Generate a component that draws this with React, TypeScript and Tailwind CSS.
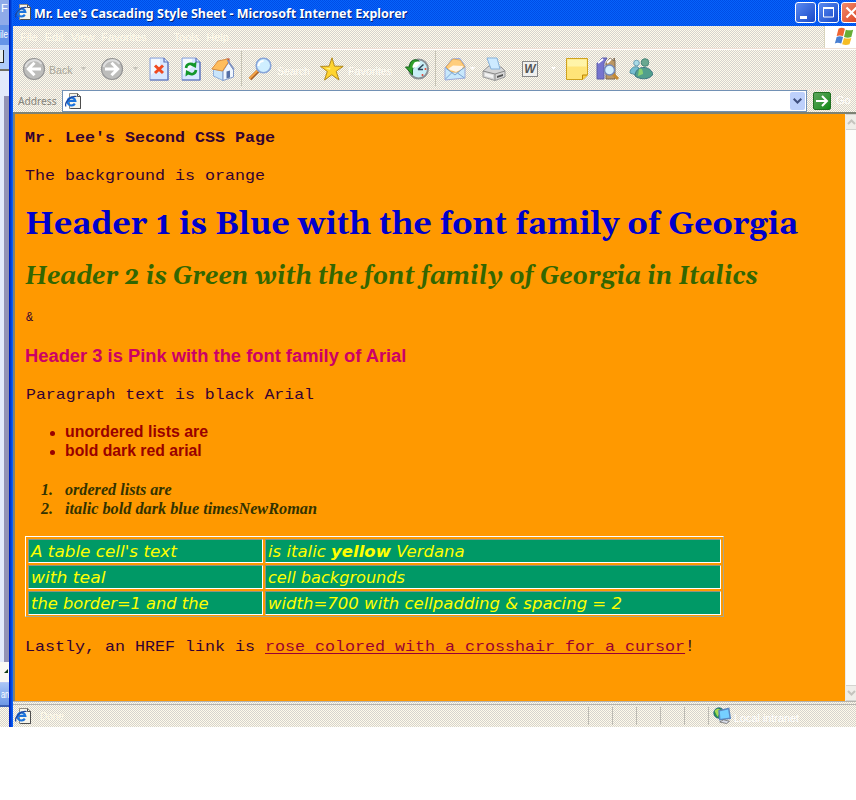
import React, { useLayoutEffect, useRef, useState } from "react";

const mono = "font-['Liberation_Mono',monospace] text-[16px] text-[#330033]";
const dither = "bg-[#ece9df] bg-[repeating-conic-gradient(#fffbea_0_25%,#d6d3ce_0_50%)] bg-[length:2px_2px]";

// Stretches one line of text to an exact width.
function Fit({ w, className = "", children }: { w: number; className?: string; children: React.ReactNode }) {
  const ref = useRef<HTMLSpanElement>(null);
  const [s, setS] = useState(1);
  useLayoutEffect(() => {
    if (ref.current) setS(w / ref.current.offsetWidth);
  }, [w]);
  return (
    <span className="block" style={{ width: w }}>
      <span ref={ref} className={"inline-block origin-left whitespace-nowrap " + className} style={{ transform: `scaleX(${s})` }}>
        {children}
      </span>
    </span>
  );
}

function Svg({ children, className = "h-6 w-6" }: { children: React.ReactNode; className?: string }) {
  return <svg viewBox="0 0 24 24" className={"shrink-0 " + className}>{children}</svg>;
}

function PageE({ className = "h-4 w-4" }: { className?: string }) {
  return (
    <svg viewBox="0 0 16 16" className={"shrink-0 " + className}>
      <path d="M4.500.5h8l3 3v12h-11z" fill="#f6f4ea" stroke="#8d8b84" />
      <path d="M12.500.5v3h3v12h-10" fill="none" stroke="#4d4d4d" />
      <path d="M9.800 10.600A3.900 3.900 0 1 1 10.300 7.900H3" fill="none" stroke="#1d74dc" strokeWidth="2.200" />
      <path d="M1 13.500C-1 9.500 5.500 2.300 11.600 3.500" fill="none" stroke="#1c459f" strokeWidth="1.200" />
    </svg>
  );
}

function Nav({ flip = false }: { flip?: boolean }) {
  return (
    <Svg>
      <circle cx="12" cy="12" r="10.500" fill="#bdbdbb" stroke="#959595" strokeWidth="1.200" />
      <path d="M3.500 10a9 9 0 0 1 16-3" fill="none" stroke="#dedede" strokeWidth="2" />
      <g transform={flip ? "translate(24 0) scale(-1 1)" : undefined}>
        <path d="M19 12H7M12.500 5.800 6.300 12l6.200 6.200" fill="none" stroke="#fff" strokeWidth="3" />
      </g>
    </Svg>
  );
}

function Paper({ children }: { children: React.ReactNode }) {
  return (
    <Svg>
      <path d="M3 1h14l4 4v18H3z" fill="#d8e8ff" stroke="#8fa5da" />
      <path d="M4 2h9v8L4 18z" fill="#f4f9ff" />
      <path d="M17 1v4h4M21 5v18H3" fill="none" stroke="#5a70b8" strokeWidth="1.200" />
      {children}
    </Svg>
  );
}

function Toolbar() {
  return (
    <div className={"flex h-[40px] items-center border-t border-[#fff] pb-[2px] pl-[9px] " + dither}>
      <Nav />
      <span className="mb-[2px] ml-[3px] w-[24px]"><Fit w={23} className="font-['Liberation_Sans',sans-serif] text-[11px] leading-[16px] text-[#a9a697]">Back</Fit></span>
      <Arrow className="ml-[8px] text-[#c3c1b8]" />
      <span className="ml-[14px] flex"><Nav flip /></span>
      <Arrow className="ml-[9px] text-[#c3c1b8]" />
      <span className="ml-[9px] flex"><Paper><path d="m8 8.500 8 7.500M16 8.500 8 16" stroke="#f04a20" strokeWidth="3" /></Paper></span>
      <span className="ml-[8px] flex"><Paper>
        <path d="M7 11c.5-4.500 5-5 8-3M17 13c-.5 4.500-5 5-8 3" fill="none" stroke="#13972a" strokeWidth="2.600" />
        <path d="m17.500 4.500-.5 6.500-5-2.500zM6.500 19.500 7 13l5 2.500z" fill="#13972a" />
      </Paper></span>
      <span className="ml-[8px] flex"><Svg>
        <path d="M15.500 1.500h3v6h-3z" fill="#b83c28" />
        <path d="m2.500 12 9.500 2v9.500L2.500 19z" fill="#c9e5fb" stroke="#8fb0de" />
        <path d="m12 14 5.500-8.500 5 7.500v7L12 23.500z" fill="#f0f7ff" stroke="#7f98c8" />
        <path d="M.8 12 7 4l9.500-2L17.500 5l-6 9z" fill="#ffbd5c" stroke="#d98d3f" />
        <path d="m16.500 3 6.500 9.500" stroke="#7f92c0" strokeWidth="1.500" />
        <path d="M15.500 14.500 19 13.500v7l-3.500 1z" fill="#5670a6" />
      </Svg></span>
      <span className="ml-[6px] h-[35px] w-px bg-[#c7c4b5]" />
      <span className="ml-[6px] flex"><Svg>
        <path d="M10 14 2 22" stroke="#a65c22" strokeWidth="3.600" /><path d="M9.500 13.500 1.500 21.500" stroke="#f4a347" strokeWidth="2" />
        <circle cx="15.500" cy="8.500" r="7.300" fill="#cfeeff" stroke="#88a5d8" strokeWidth="1.600" />
        <path d="M10.500 9a5 5 0 0 1 5-5" fill="none" stroke="#fff" strokeWidth="2" />
      </Svg></span>
      <span className="ml-[5px] w-[34px]"><Fit w={33} className="font-['Liberation_Sans',sans-serif] text-[11px] text-[#fffdf5]">Search</Fit></span>
      <span className="ml-[9px] flex"><Svg>
        <path d="m12 .8 2.500 8.400 8.700.1-7 5 2.800 8.700-7.200-5.200L4.500 23l2.800-8.600-6.800-5 8.600-.2z" fill="#ffd42f" stroke="#b38a1c" strokeLinejoin="round" />
        <path d="m12 4-1.500 7-5.500 0 5 2z" fill="#fff27c" />
      </Svg></span>
      <span className="ml-[4px] w-[46px]"><Fit w={44} className="font-['Liberation_Sans',sans-serif] text-[11px] text-[#fffdf5]">Favorites</Fit></span>
      <span className="ml-[11px] flex"><Svg>
        <circle cx="13.500" cy="12" r="9.500" fill="#c8eef6" stroke="#8a9094" strokeWidth="2" />
        <path d="M14 4C9 1 4.500 4 4.500 10H.5l7 8V13c0-4 5-3 6-6z" fill="#32a12b" stroke="#18691d" />
        <path d="M8.500 7c1.500-3 6-3 7-1l-3.500 4-4 1c-1-1-.5-2 .5-4z" fill="#fff" />
        <path d="m13 12.500 5.500-5M13 12.500h5" stroke="#304558" strokeWidth="1.500" />
        <circle cx="17.500" cy="18" r="1" fill="#e34335" /><circle cx="20.500" cy="12" r="1" fill="#e34335" />
      </Svg></span>
      <span className="ml-[6px] h-[35px] w-px bg-[#c7c4b5]" />
      <span className="ml-[7px] flex"><Svg>
        <path d="M2 11 9 2l8-.5L22 9v12L2 23z" fill="#c8e8fc" stroke="#9aa9da" />
        <path d="m3 10 7-8 7 1 5 7-7 5H8z" fill="#ffcd7b" stroke="#e0a95c" /><path d="m5 12 5-3.500 10 .5-1 3-6 3z" fill="#fff5e6" />
        <path d="M2.500 11 12 18l9.500-8M2.500 22l7-7M21.500 21l-7-5" fill="none" stroke="#7ba6d6" />
      </Svg></span>
      <Arrow className="ml-[3px] text-white" />
      <span className="ml-[7px] flex"><Svg>
        <path d="M1 14 7 9l12 1 4 4v6l-10 3.500L1 20z" fill="#d6d6d6" stroke="#999" />
        <path d="M5 1h10l3 11H9z" fill="#cdeaff" stroke="#86b1d9" />
        <path d="m1 14 12 3 10-3M13 17v6" fill="none" stroke="#888" /><path d="m3 16 8 2v3l-8-2z" fill="#f3f3f3" /><path d="m15 19 6-2v2l-6 2z" fill="#555" />
      </Svg></span>
      <span className="ml-[16px] flex h-4 w-4 items-center justify-center border border-[#888] bg-[#f0f0ee] font-['Liberation_Sans',sans-serif] text-[12px] leading-none font-bold text-[#555] italic">W</span>
      <Arrow className="ml-[13px] text-white" />
      <span className="ml-[9px] flex"><Svg>
        <path d="M1.500 1.500h21V18l-4.500 4.500H1.500z" fill="#ffe478" stroke="#d0a31e" /><path d="M2.500 2.500h19v7h-19z" fill="#fff4a8" /><path d="M17.500 22v-4h4.500" fill="#ffd039" stroke="#b98409" />
      </Svg></span>
      <span className="ml-[7px] flex"><Svg>
        <path d="m1 6 5-5h5L8 6v16H1z" fill="#7674cf" stroke="#5f5ea8" /><path d="m10 6 4-5 4 3v-3l1 3v18h-9z" fill="#bd9863" stroke="#7b664e" /><path d="m2 6 5-4M11 6l4-4" stroke="#fff" strokeWidth="2" />
        <path d="m17 17 5 5" stroke="#c68a30" strokeWidth="3" /><circle cx="13.500" cy="13" r="5" fill="#d2efff" stroke="#7389bd" strokeWidth="1.500" />
      </Svg></span>
      <span className="ml-[9px] flex"><Svg>
        <circle cx="7.500" cy="6" r="2.800" fill="#a9dbe6" stroke="#6d9fb6" /><circle cx="16" cy="5.500" r="3.800" fill="#6aa890" stroke="#4a8679" />
        <path d="M1 16c0-5 4-7 8-6l3 6-5 2z" fill="#75bdd1" stroke="#5595a5" /><path d="M6 19c0-10 14-12 18-2-3 6-13 6-18 2z" fill="#519f8c" stroke="#3a7681" /><path d="M10 12c3-2 4 2 4 5l-5 2z" fill="#8bd173" />
      </Svg></span>
    </div>
  );
}

function Arrow({ className = "" }: { className?: string }) {
  return <svg viewBox="0 0 5 3" className={"h-[3px] w-[5px] shrink-0 " + className}><path d="M0 0h5L2.500 3z" fill="currentColor" /></svg>;
}

function TitleButton({ red = false, children }: { red?: boolean; children: React.ReactNode }) {
  return (
    <span className={"flex h-[21px] w-[21px] shrink-0 rounded-[3px] border border-white " + (red ? "bg-linear-to-br from-[#f08a6c] to-[#d93a18]" : "bg-linear-to-br from-[#5b8af0] to-[#1747c8]")}>
      <svg viewBox="0 0 19 19" className="h-[19px] w-[19px]" fill="none" stroke="#fff">{children}</svg>
    </span>
  );
}

const rows: [React.ReactNode, number, React.ReactNode, number][] = [
  ["A table cell's text", 146, <>is italic <b className="font-bold">yellow</b> Verdana</>, 197],
  ["with teal", 74, "cell backgrounds", 137],
  ["the border=1 and the", 178, "width=700 with cellpadding & spacing = 2", 354],
];

function Cell({ children, w, className }: { children: React.ReactNode; w: number; className: string }) {
  return (
    <div className={"h-[24px] border border-t-[#8c9585] border-r-white border-b-white border-l-[#8c9585] bg-[#009966] pl-[2px] text-[16px] leading-[23px] text-[#ffff00] italic font-['DejaVu_Sans',sans-serif] font-extralight " + className}>
      <Fit w={w}>{children}</Fit>
    </div>
  );
}

function Page() {
  return (
    <main className="h-[587px] w-[830px] shrink-0 overflow-hidden bg-[#ff9900] pt-[14px] pl-[10px]">
      <p className={"h-[38px] leading-[20px] font-bold " + mono}><Fit w={250} className="text-[15px]">Mr. Lee's Second CSS Page</Fit></p>
      <p className={"h-[38px] leading-[20px] " + mono}><Fit w={240} className="text-[15px]">The background is orange</Fit></p>
      <h1 className="h-[52px] pt-px font-['Gelasio','Georgia','DejaVu_Serif',serif] text-[33px] leading-[38px] font-bold text-[#0000cc]"><Fit w={773}>Header 1 is Blue with the font family of Georgia</Fit></h1>
      <h2 className="h-[52px] pt-[2px] font-['Gelasio','Georgia','DejaVu_Serif',serif] text-[25px] leading-[38px] font-bold text-[#336600] italic"><Fit w={733}>Header 2 is Green with the font family of Georgia in Italics</Fit></h2>
      <p className="h-[38px] pl-[1px] font-['Liberation_Mono',monospace] text-[12px] leading-[20px] text-[#330033]">&amp;</p>
      <h3 className="h-[39px] font-['Liberation_Sans',sans-serif] text-[18px] leading-[20px] font-bold text-[#cc0066]"><Fit w={381}>Header 3 is Pink with the font family of Arial</Fit></h3>
      <p className={"h-[37px] pl-[1px] leading-[20px] " + mono}><Fit w={288} className="text-[15px]">Paragraph text is black Arial</Fit></p>
      <ul className="mb-[20px] font-['Liberation_Sans',sans-serif] text-[16px] leading-[19px] font-bold text-[#990000]">
        {([["unordered lists are", 143], ["bold dark red arial", 137]] as [string, number][]).map(([t, w]) => (
          <li key={t} className="flex h-[19px] items-center"><span className="mt-[4px] mr-[10px] ml-[25px] h-[5px] w-[5px] rounded-full bg-[#990000]" /><Fit w={w}>{t}</Fit></li>
        ))}
      </ul>
      <ol className="mb-[18px] font-['Liberation_Serif',serif] text-[16px] leading-[19px] font-bold text-[#333300] italic">
        {([["ordered lists are", 107], ["italic bold dark blue timesNewRoman", 252]] as [string, number][]).map(([t, w], i) => (
          <li key={t} className="flex h-[19px]"><span className="ml-[16px] w-[24px]">{i + 1}.</span><Fit w={w}>{t}</Fit></li>
        ))}
      </ol>
      <div className="flex h-[81px] w-[699px] flex-col gap-[2px] border border-t-white border-r-[#aaa78d] border-b-[#aaa78d] border-l-white p-[2px]">
        {rows.map(([a, aw, b, bw], i) => (
          <div key={i} className="flex gap-[2px]"><Cell w={aw} className="w-[235px]">{a}</Cell><Cell w={bw} className="w-[457px]">{b}</Cell></div>
        ))}
      </div>
      <p className={"mt-[20px] flex leading-[20px] " + mono}>
        <Fit w={240} className="text-[15px] whitespace-pre">{"Lastly, an HREF link is "}</Fit>
        <a className="cursor-crosshair text-[#990033]"><Fit w={420} className="text-[15px] underline underline-offset-[2px]">rose colored with a crosshair for a cursor</Fit></a>
        <span>!</span>
      </p>
    </main>
  );
}

export default function App() {
  return (
    <div className="h-[800px] w-[856px] overflow-hidden bg-white">
      <div className="flex h-[727px]">
        <aside className="w-[9px] shrink-0 overflow-hidden bg-[#e3e9fb] font-['Liberation_Sans',sans-serif] text-[11px] text-white">
          <div className="h-[25px] bg-[#8fabe9] pl-px">F</div>
          <div className="h-[20px] bg-[#6594e8] pt-px"><Fit w={8}>ile</Fit></div>
          <div className="h-[26px] border-b-2 border-[#716f65] bg-[#aecbfa] pt-[5px]"><span className="block h-[13px] w-[4px] border-r border-b border-[#222] bg-[#e8eef0]" /></div>
          <div className="h-[25px]" />
          <div className="ml-[4px] h-[566px] bg-[#9392b5]" />
          <div className="h-[20px] bg-[#faf9f4] pt-[7px] pl-[4px]"><svg viewBox="0 0 4 4" className="h-1 w-1"><path d="M4 0v4H0z" fill="#143c14" /></svg></div>
          <div className="h-[25px] border-t border-b-2 border-t-[#b8c8f5] border-b-[#3f62b4] bg-linear-to-b from-[#a9c5f6] to-[#6d97e5] pt-[3px] pl-px"><Fit w={8}>an</Fit></div>
          <div className={"h-[20px] " + dither} />
        </aside>
        <div className="w-[4px] shrink-0 bg-linear-to-r from-[#0010b5] to-[#1268ff]" />
        <div className="flex w-[843px] shrink-0 flex-col">
          <header className="flex h-[26px] items-center bg-[#0758ef] bg-[repeating-conic-gradient(#004de6_0_25%,#0663fc_0_50%)] bg-[length:2px_2px] pl-[2px]">
            <span className="mb-[2px] flex"><PageE /></span>
            <span className="mb-[2px] ml-[3px] w-[373px] [text-shadow:1px_1px_0_#00247c]"><Fit w={373} className="font-['Noto_Sans',sans-serif] text-[13px] leading-[24px] font-bold text-white">Mr. Lee's Cascading Style Sheet - Microsoft Internet Explorer</Fit></span>
            <span className="mb-px ml-auto flex w-[61px] gap-[2px] overflow-hidden">
              <TitleButton><path d="M4 14.500h7" strokeWidth="3" /></TitleButton>
              <TitleButton><path d="M4.500 5v9h10V5" /><path d="M4 5h11" strokeWidth="2" /></TitleButton>
              <TitleButton red><path d="m4.500 4.500 10 10m0-10-10 10" strokeWidth="2.200" /></TitleButton>
            </span>
          </header>
          <nav className={"flex h-[23px] border-b border-[#f0e0d6] " + dither}>
            <div className="flex w-[811px] items-center gap-[7px] pl-[7px] font-['Liberation_Sans',sans-serif] text-[11px] text-[#fffbea]"><span>File</span><span>Edit</span><span>View</span><span>Favorites</span><span className="ml-[20px]">Tools</span><span>Help</span></div>
            <div className="flex flex-1 justify-center border-l border-[#d9d5be] bg-white pl-[7px]"><Svg className="h-[22px] w-[22px]">
              <path d="M6 3c3-2 5-1 7 0l-2 8c-3-1-5-1-7 0z" fill="#ee6432" /><path d="M14 4c3 1 5 1 8 0l-2 8c-3 1-5 1-8 0z" fill="#66ad36" /><path d="M4 12c2-1 5-1 7 0l-2 7c-3-1-5-1-7 0z" fill="#477fd2" /><path d="M12 13c3 1 5 1 8 0l-2 7c-3 1-5 1-8 0z" fill="#f6bd24" />
            </Svg></div>
          </nav>
          <Toolbar />
          <div className={"flex h-[23px] border-t border-[#f2e7dc] pl-[5px] " + dither}>
            <span className="w-[44px] pt-[2px]"><Fit w={39} className="align-top font-['Noto_Sans',sans-serif] text-[11px] leading-[18px] text-[#858379]">Address</Fit></span>
            <div className="flex h-[22px] w-[745px] items-center border border-[#7291b5] bg-white pl-[2px]">
              <PageE />
              <span className="mr-[1px] ml-auto flex h-[18px] w-[15px] items-center justify-center rounded-[2px] bg-[#bdd0fb]"><svg viewBox="0 0 9 6" className="h-[6px] w-[9px]"><path d="m.7.7 3.800 3.800L8.300.7" fill="none" stroke="#415181" strokeWidth="2" /></svg></span>
            </div>
            <span className="mt-[2px] ml-[6px] flex h-[18px] w-[18px] items-center justify-center rounded-[2px] border border-[#207021] bg-linear-to-br from-[#5aa55c] to-[#048a10]"><svg viewBox="0 0 14 14" className="h-[14px] w-[14px]"><path d="M1 7h11M7 2l5 5-5 5" fill="none" stroke="#fff" strokeWidth="2" /></svg></span>
            <span className="ml-[5px] font-['Liberation_Sans',sans-serif] text-[11px] leading-[20px] text-white">Go</span>
          </div>
          <div className="flex h-[589px] border-t-2 border-l-2 border-[#7d8274]">
            <Page />
            <aside className="flex flex-1 flex-col justify-between border-l border-[#ecebe8] bg-[#fdfdfb]">
              <Scroll up /><Scroll />
            </aside>
          </div>
          <footer className={"h-[26px] " + dither}>
            <div className="flex h-[26px] items-center border-t-[4px] border-double border-[#b5b3ad] pl-[2px]">
              <PageE />
              <span className="ml-[9px] w-[548px] shrink-0 font-['Liberation_Sans',sans-serif] text-[10px] text-[#fffbea]">Done</span>
              {[0, 1, 2, 3, 4, 5].map((i) => <span key={i} className="h-[18px] w-[24px] shrink-0 border-l border-[#bdbbb3]" />)}
              <span className="-ml-[19px] flex shrink-0"><Svg className="h-[18px] w-[18px]">
                <circle cx="8" cy="8" r="7" fill="#2c934b" stroke="#165b8b" /><path d="M2 5c5-6 10-1 7 3l-3 5z" fill="#a4d955" /><path d="m8 5 13-3 2 13-14 2z" fill="#76cfff" stroke="#5a86c0" strokeWidth="2" /><path d="m9 20 5-3 8 2-4 3z" fill="#d8dce8" stroke="#666" />
              </Svg></span>
              <span className="ml-[3px]"><Fit w={65} className="font-['Liberation_Sans',sans-serif] text-[11px] text-white">Local intranet</Fit></span>
            </div>
          </footer>
        </div>
      </div>
    </div>
  );
}

function Scroll({ up = false }: { up?: boolean }) {
  return <span className="flex h-[16px] items-center justify-center border-y border-[#d4d4d0] bg-[#efeee9]"><svg viewBox="0 0 9 6" className="h-[6px] w-[9px]"><path d={up ? "m1 5 3.500-3.500L8 5" : "m1 1 3.500 3.500L8 1"} fill="none" stroke="#c5c4be" strokeWidth="2" /></svg></span>;
}
